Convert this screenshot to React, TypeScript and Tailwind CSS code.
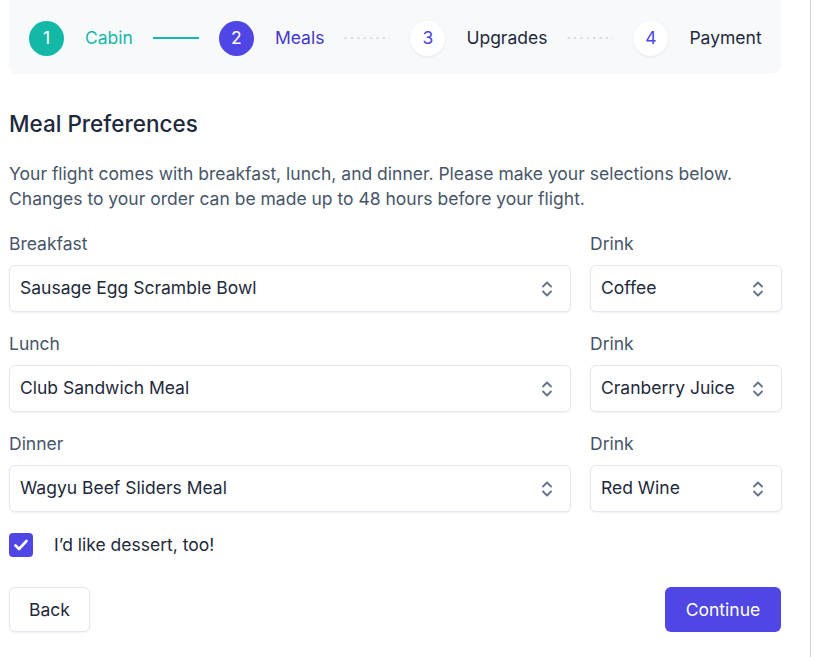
import { useState } from "react";

const steps = [
  { n: 1, label: "Cabin", state: "done" },
  { n: 2, label: "Meals", state: "current" },
  { n: 3, label: "Upgrades", state: "todo" },
  { n: 4, label: "Payment", state: "todo" },
];

const meals = [
  { label: "Breakfast", meal: "Sausage Egg Scramble Bowl", drink: "Coffee" },
  { label: "Lunch", meal: "Club Sandwich Meal", drink: "Cranberry Juice" },
  { label: "Dinner", meal: "Wagyu Beef Sliders Meal", drink: "Red Wine" },
];

const UpDown = () => (
  <svg width="14" height="18" viewBox="0 0 14 18" fill="none" stroke="#64748b" strokeWidth="1.8" strokeLinecap="round" strokeLinejoin="round">
    <path d="M3 6.5 7 2.5l4 4" />
    <path d="M3 11.5l4 4 4-4" />
  </svg>
);

const Connector = ({ solid }: { solid: boolean }) =>
  solid ? (
    <div className="w-[46px] h-[2px] bg-[#14b8a6] mx-5" />
  ) : (
    <svg width="46" height="2" className="mx-5">
      <line x1="1" y1="1" x2="46" y2="1" stroke="#b6bcc6" strokeWidth="1.2" strokeDasharray="1.2 5.2" strokeLinecap="round" />
    </svg>
  );

const Select = ({ value, className }: { value: string; className: string }) => (
  <div className={`${className} h-[47px] flex items-center justify-between pl-[10px] pr-[16px] bg-white border border-[#e2e8f0] rounded-md shadow-[0_1px_2px_rgba(15,23,42,0.06)] text-[17.5px] text-[#1e293b]`}>
    <span>{value}</span>
    <UpDown />
  </div>
);

const App = () => {
  const [dessert, setDessert] = useState(true);

  return (
    <div className="w-[811px] min-h-screen border-r border-[#d4d6da] bg-white font-['Inter',sans-serif]">
      <div className="w-[772px] ml-[9px] pb-[26px]">
        <nav className="h-[74px] bg-[#f8f9fb] rounded-b-lg flex items-center pl-5 pt-[2px]">
          {steps.map((step, i) => (
            <div key={step.n} className="flex items-center">
              <div
                className={`w-[35px] h-[35px] rounded-full flex items-center justify-center text-[17.5px] ${
                  step.state === "done"
                    ? "bg-[#14b8a6] text-white"
                    : step.state === "current"
                    ? "bg-[#4f46e5] text-white"
                    : "bg-white text-[#4f46e5] shadow-[0_1px_3px_rgba(15,23,42,0.08)]"
                }`}
              >
                {step.n}
              </div>
              <span
                className={`ml-[21px] text-[17.5px] ${
                  step.state === "done" ? "text-[#14b8a6]" : step.state === "current" ? "text-[#4338ca]" : "text-[#1e293b]"
                }`}
              >
                {step.label}
              </span>
              {i < steps.length - 1 && <Connector solid={step.state === "done"} />}
            </div>
          ))}
        </nav>

        <h1 className="mt-[36px] text-[22.5px] leading-[27px] font-medium text-[#1e293b]">Meal Preferences</h1>

        <p className="mt-[24px] text-[17.5px] leading-[25px] text-[#475569]">
          Your flight comes with breakfast, lunch, and dinner. Please make your selections below.
          <br />
          Changes to your order can be made up to 48 hours before your flight.
        </p>

        <div className="mt-[20px] flex flex-col gap-[19px]">
          {meals.map((m) => (
            <div key={m.label} className="flex gap-[19px]">
              <div className="flex flex-col">
                <label className="text-[17.5px] leading-[25px] text-[#475569]">{m.label}</label>
                <Select value={m.meal} className="mt-[9px] w-[562px]" />
              </div>
              <div className="flex flex-col">
                <label className="text-[17.5px] leading-[25px] text-[#475569]">Drink</label>
                <Select value={m.drink} className="mt-[9px] w-[192px]" />
              </div>
            </div>
          ))}
        </div>

        <label className="mt-[20px] flex items-center gap-[21px] cursor-pointer">
          <button
            type="button"
            onClick={() => setDessert(!dessert)}
            className={`w-[24px] h-[24px] rounded-[4px] flex items-center justify-center ${dessert ? "bg-[#4f46e5]" : "bg-white border border-gray-300"}`}
          >
            {dessert && (
              <svg width="18" height="18" viewBox="0 0 18 18" fill="none" stroke="white" strokeWidth="2.6" strokeLinecap="round" strokeLinejoin="round">
                <path d="M3.5 9.5l3.5 3.5L14.5 5" />
              </svg>
            )}
          </button>
          <span className="text-[17.5px] text-[#1e293b]">I’d like dessert, too!</span>
        </label>

        <div className="mt-[29px] flex justify-between">
          <button className="h-[45px] w-[81px] bg-white border border-[#e2e8f0] rounded-md shadow-[0_1px_2px_rgba(15,23,42,0.06)] text-[17.5px] text-[#1e293b]">
            Back
          </button>
          <button className="h-[45px] w-[116px] bg-[#4f46e5] rounded-md text-[17.5px] text-white">Continue</button>
        </div>
      </div>
    </div>
  );
};

export default App;
